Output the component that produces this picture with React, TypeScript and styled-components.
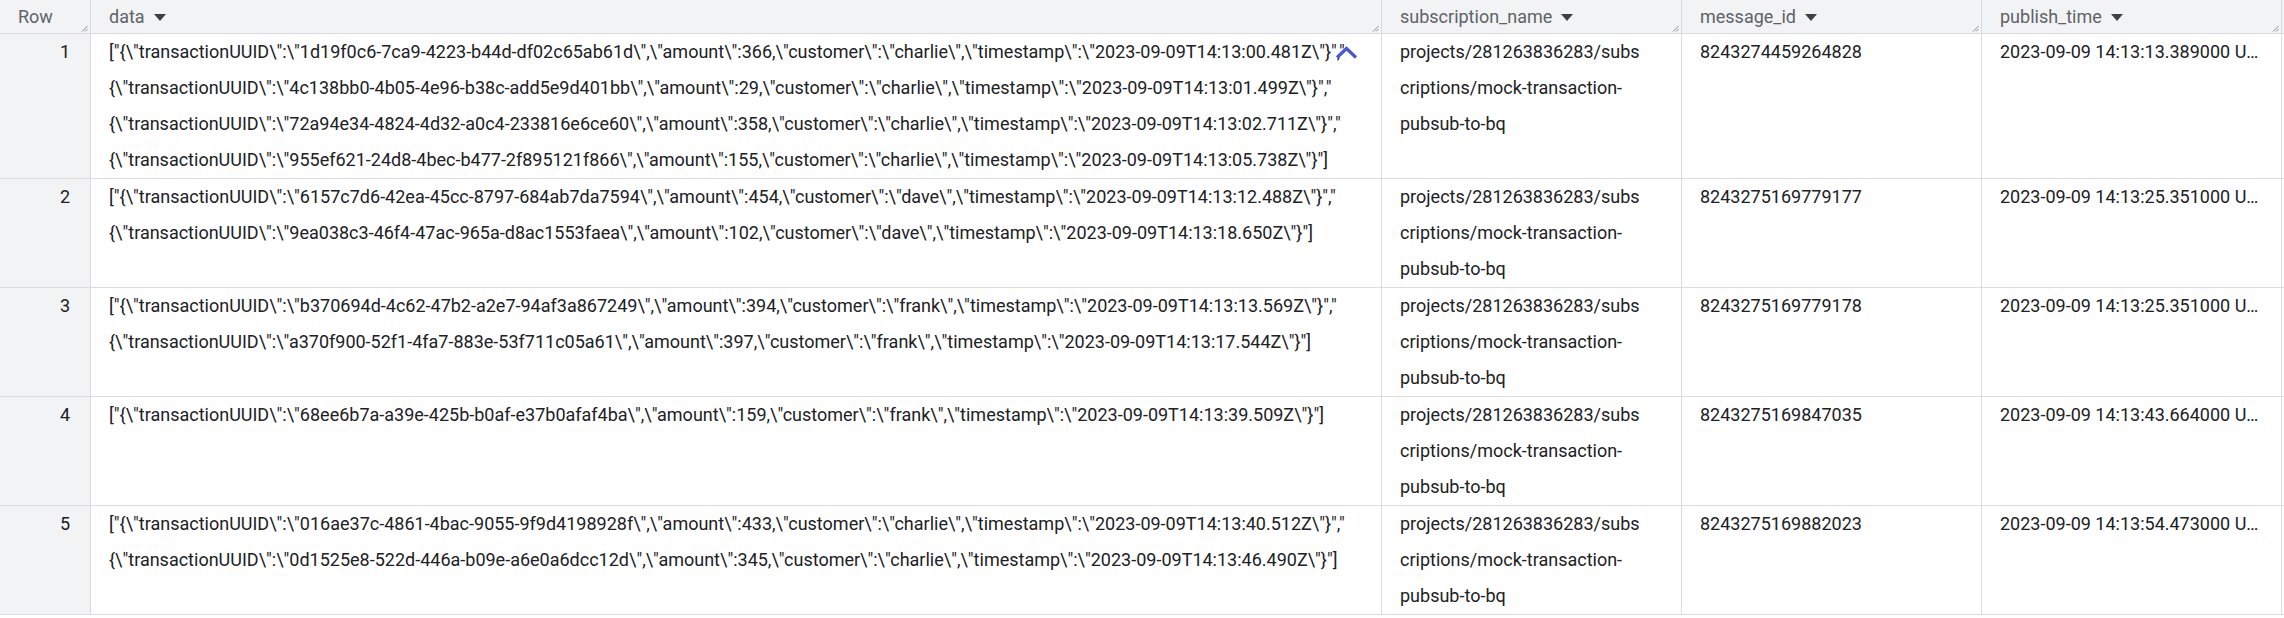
import React from "react";
import styled, { createGlobalStyle } from "styled-components";

const GlobalStyle = createGlobalStyle`
  html, body {
    margin: 0;
    padding: 0;
    background: #ffffff;
  }
  body {
    font-family: Roboto, "Noto Sans", "Liberation Sans", sans-serif;
    overflow: hidden;
  }
`;

const COLS = "91px 1291px 300px 300px 300px";

const Table = styled.div`
  display: flex;
  flex-direction: column;
  width: 2284px;
  font-size: 18px;
  color: #202124;
`;

const Row = styled.div<{ $header?: boolean }>`
  display: grid;
  grid-template-columns: ${COLS};
  border-bottom: 1px solid #dadce0;
  background: ${(p) => (p.$header ? "#f1f3f4" : "#ffffff")};
`;

const HeadCell = styled.div`
  position: relative;
  display: flex;
  align-items: center;
  gap: 9px;
  height: 33px;
  padding-left: 18px;
  border-right: 1px solid #dadce0;
  color: #5f6368;
  white-space: nowrap;
`;

const SortArrow = styled.svg`
  width: 12px;
  height: 7px;
  flex: none;
  margin-top: 1px;
`;

const Resize = styled.svg`
  position: absolute;
  right: 2px;
  bottom: 1px;
  width: 7px;
  height: 7px;
`;

const Cell = styled.div<{ $gray?: boolean; $right?: boolean }>`
  position: relative;
  min-width: 0;
  padding: 0 ${(p) => (p.$right ? "20px" : "14px")} 0 18px;
  border-right: 1px solid #dadce0;
  background: ${(p) => (p.$gray ? "#f1f3f4" : "transparent")};
  text-align: ${(p) => (p.$right ? "right" : "left")};
  overflow: hidden;
`;

const Line = styled.div`
  height: 36px;
  line-height: 36px;
  white-space: nowrap;
`;

const Collapse = styled.svg`
  position: absolute;
  top: 12px;
  right: 23px;
  width: 23px;
  height: 13px;
`;

const Arrow = () => (
  <SortArrow viewBox="0 0 12 7">
    <polygon points="0,0 12,0 6,7" fill="#3c4043" />
  </SortArrow>
);

const Handle = () => (
  <Resize viewBox="0 0 7 7">
    <line x1="1" y1="6.5" x2="6.5" y2="1" stroke="#80868b" strokeWidth="0.9" />
    <line x1="4" y1="6.5" x2="6.5" y2="4" stroke="#80868b" strokeWidth="0.9" />
  </Resize>
);

const rows = [
  {
    n: 1,
    data: [
      '["{\\"transactionUUID\\":\\"1d19f0c6-7ca9-4223-b44d-df02c65ab61d\\",\\"amount\\":366,\\"customer\\":\\"charlie\\",\\"timestamp\\":\\"2023-09-09T14:13:00.481Z\\"}","',
      '{\\"transactionUUID\\":\\"4c138bb0-4b05-4e96-b38c-add5e9d401bb\\",\\"amount\\":29,\\"customer\\":\\"charlie\\",\\"timestamp\\":\\"2023-09-09T14:13:01.499Z\\"}","',
      '{\\"transactionUUID\\":\\"72a94e34-4824-4d32-a0c4-233816e6ce60\\",\\"amount\\":358,\\"customer\\":\\"charlie\\",\\"timestamp\\":\\"2023-09-09T14:13:02.711Z\\"}","',
      '{\\"transactionUUID\\":\\"955ef621-24d8-4bec-b477-2f895121f866\\",\\"amount\\":155,\\"customer\\":\\"charlie\\",\\"timestamp\\":\\"2023-09-09T14:13:05.738Z\\"}"]',
    ],
    id: "8243274459264828",
    time: "2023-09-09 14:13:13.389000 U…",
    expanded: true,
  },
  {
    n: 2,
    data: [
      '["{\\"transactionUUID\\":\\"6157c7d6-42ea-45cc-8797-684ab7da7594\\",\\"amount\\":454,\\"customer\\":\\"dave\\",\\"timestamp\\":\\"2023-09-09T14:13:12.488Z\\"}","',
      '{\\"transactionUUID\\":\\"9ea038c3-46f4-47ac-965a-d8ac1553faea\\",\\"amount\\":102,\\"customer\\":\\"dave\\",\\"timestamp\\":\\"2023-09-09T14:13:18.650Z\\"}"]',
    ],
    id: "8243275169779177",
    time: "2023-09-09 14:13:25.351000 U…",
  },
  {
    n: 3,
    data: [
      '["{\\"transactionUUID\\":\\"b370694d-4c62-47b2-a2e7-94af3a867249\\",\\"amount\\":394,\\"customer\\":\\"frank\\",\\"timestamp\\":\\"2023-09-09T14:13:13.569Z\\"}","',
      '{\\"transactionUUID\\":\\"a370f900-52f1-4fa7-883e-53f711c05a61\\",\\"amount\\":397,\\"customer\\":\\"frank\\",\\"timestamp\\":\\"2023-09-09T14:13:17.544Z\\"}"]',
    ],
    id: "8243275169779178",
    time: "2023-09-09 14:13:25.351000 U…",
  },
  {
    n: 4,
    data: [
      '["{\\"transactionUUID\\":\\"68ee6b7a-a39e-425b-b0af-e37b0afaf4ba\\",\\"amount\\":159,\\"customer\\":\\"frank\\",\\"timestamp\\":\\"2023-09-09T14:13:39.509Z\\"}"]',
    ],
    id: "8243275169847035",
    time: "2023-09-09 14:13:43.664000 U…",
  },
  {
    n: 5,
    data: [
      '["{\\"transactionUUID\\":\\"016ae37c-4861-4bac-9055-9f9d4198928f\\",\\"amount\\":433,\\"customer\\":\\"charlie\\",\\"timestamp\\":\\"2023-09-09T14:13:40.512Z\\"}","',
      '{\\"transactionUUID\\":\\"0d1525e8-522d-446a-b09e-a6e0a6dcc12d\\",\\"amount\\":345,\\"customer\\":\\"charlie\\",\\"timestamp\\":\\"2023-09-09T14:13:46.490Z\\"}"]',
    ],
    id: "8243275169882023",
    time: "2023-09-09 14:13:54.473000 U…",
  },
];

const subscription = ["projects/281263836283/subs", "criptions/mock-transaction-", "pubsub-to-bq"];

export default function App() {
  return (
    <>
      <GlobalStyle />
      <Table>
        <Row $header>
          <HeadCell>
            Row
            <Handle />
          </HeadCell>
          <HeadCell>
            data <Arrow />
            <Handle />
          </HeadCell>
          <HeadCell>
            subscription_name <Arrow />
            <Handle />
          </HeadCell>
          <HeadCell>
            message_id <Arrow />
            <Handle />
          </HeadCell>
          <HeadCell>
            publish_time <Arrow />
            <Handle />
          </HeadCell>
        </Row>
        {rows.map((r) => (
          <Row key={r.n}>
            <Cell $gray $right>
              <Line>{r.n}</Line>
            </Cell>
            <Cell>
              {r.data.map((d, i) => (
                <Line key={i}>{d}</Line>
              ))}
              {r.expanded && (
                <Collapse viewBox="0 0 23 13">
                  <polyline
                    points="2,11.5 11.5,2.5 21,11.5"
                    fill="none"
                    stroke="#4657d8"
                    strokeWidth="3.2"
                  />
                </Collapse>
              )}
            </Cell>
            <Cell>
              {subscription.map((s, i) => (
                <Line key={i}>{s}</Line>
              ))}
            </Cell>
            <Cell>
              <Line>{r.id}</Line>
            </Cell>
            <Cell>
              <Line>{r.time}</Line>
            </Cell>
          </Row>
        ))}
      </Table>
    </>
  );
}
